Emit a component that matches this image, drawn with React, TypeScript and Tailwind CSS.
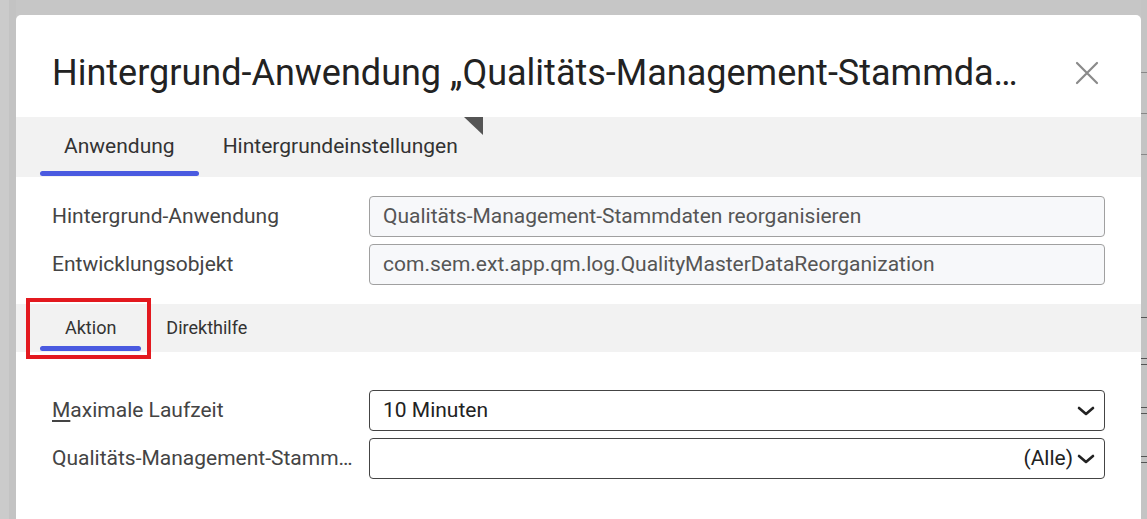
import React from "react";

const Chevron = () => (
  <svg width="18" height="10" viewBox="0 0 18 10" className="shrink-0">
    <polyline points="2,2 9,8 16,2" fill="none" stroke="#222" strokeWidth="2.6" strokeLinecap="round" strokeLinejoin="round" />
  </svg>
);

export default function App() {
  return (
    <div className="w-[1147px] h-[519px] overflow-hidden bg-[#c8c8c8] flex" style={{ fontFamily: "Roboto, 'Liberation Sans', sans-serif" }}>
      <div className="w-[16px] shrink-0 flex">
        <div className="w-[9px] bg-[#cbcbcb]" />
        <div className="w-[7px] bg-[#c3c3c3]" />
      </div>
      <div className="flex-1 flex flex-col">
        <div className="h-[15px] shrink-0 bg-[#c6c6c6]" />
        <div className="flex-1 bg-white rounded-t-[5px] flex flex-col relative">
          {/* header */}
          <div className="h-[102px] shrink-0 flex items-center pl-[36px] pr-[42px] pt-[14px]">
            <h1 className="flex-1 text-[36px] leading-[44px] text-[#222] whitespace-nowrap overflow-hidden">
              Hintergrund-Anwendung „Qualitäts-Management-Stammda…
            </h1>
            <svg width="24" height="24" viewBox="0 0 24 24" className="shrink-0 ml-[40px]">
              <path d="M2 2 L22 22 M22 2 L2 22" stroke="#8a8a8a" strokeWidth="2.2" strokeLinecap="round" />
            </svg>
          </div>
          {/* main tabs */}
          <div className="h-[60px] shrink-0 bg-[#f2f2f2] flex pl-[24px]">
            <div className="relative px-[24px] flex items-center text-[21px] text-[#333]">
              Anwendung
              <div className="absolute left-0 right-0 bottom-[1px] h-[5px] rounded-full bg-[#4a5ae0]" />
            </div>
            <div className="relative px-[24px] flex items-center text-[21px] text-[#333]">
              Hintergrundeinstellungen
              <svg width="19" height="18" viewBox="0 0 19 18" className="absolute right-[-1px] top-0">
                <polygon points="0,0 19,0 19,18" fill="#555" />
              </svg>
            </div>
          </div>
          {/* fields */}
          <div className="px-[36px] pt-[19px] flex flex-col gap-[7px]">
            <div className="flex items-center">
              <div className="w-[317px] shrink-0 text-[21px] text-[#444]">Hintergrund-Anwendung</div>
              <div className="flex-1 h-[41px] border border-[#a0a0a0] rounded-[4px] bg-[#f7f8fa] flex items-center px-[13px] text-[21px] text-[#555]">
                Qualitäts-Management-Stammdaten reorganisieren
              </div>
            </div>
            <div className="flex items-center">
              <div className="w-[317px] shrink-0 text-[21px] text-[#444]">Entwicklungsobjekt</div>
              <div className="flex-1 h-[41px] border border-[#a0a0a0] rounded-[4px] bg-[#f7f8fa] flex items-center px-[13px] text-[21px] text-[#555]">
                com.sem.ext.app.qm.log.QualityMasterDataReorganization
              </div>
            </div>
          </div>
          {/* sub tabs */}
          <div className="mt-[19px] h-[48px] shrink-0 bg-[#f2f2f2] flex pl-[24px] relative">
            <div className="relative px-[25px] flex items-center text-[18px] text-[#333] pb-[2px]">
              Aktion
              <div className="absolute left-0 right-0 bottom-[1px] h-[5px] rounded-full bg-[#4a5ae0]" />
            </div>
            <div className="relative px-[25px] flex items-center text-[18px] text-[#333] pb-[2px]">
              Direkthilfe
            </div>
            <div className="absolute left-[10px] top-[-6px] w-[125px] h-[61px] border-[4px] border-[#e3191f]" />
          </div>
          {/* action fields */}
          <div className="px-[36px] pt-[38px] flex flex-col gap-[7px]">
            <div className="flex items-center">
              <div className="w-[317px] shrink-0 text-[21px] text-[#444]">
                <span className="underline underline-offset-[3px] decoration-[1.5px]">M</span>aximale Laufzeit
              </div>
              <div className="flex-1 h-[41px] border border-[#444] rounded-[4px] bg-white flex items-center pl-[13px] pr-[9px] text-[21px] text-[#222]">
                <span className="flex-1">10 Minuten</span>
                <Chevron />
              </div>
            </div>
            <div className="flex items-center">
              <div className="w-[317px] shrink-0 text-[21px] text-[#444] whitespace-nowrap overflow-hidden text-ellipsis pr-[15px]">
                Qualitäts-Management-Stammdaten
              </div>
              <div className="flex-1 h-[41px] border border-[#444] rounded-[4px] bg-white flex items-center justify-end pl-[13px] pr-[9px] text-[21px] text-[#222] gap-[4px]">
                <span>(Alle)</span>
                <Chevron />
              </div>
            </div>
          </div>
        </div>
      </div>
      <div className="w-[6px] shrink-0 bg-[#c4c4c4] flex flex-col">
        <div className="h-[72px]" />
        <div className="h-[1px] bg-[#888]" />
        <div className="h-[40px]" />
        <div className="h-[1px] bg-[#888]" />
        <div className="h-[40px]" />
        <div className="h-[1px] bg-[#888]" />
        <div className="h-[162px]" />
        <div className="h-[1px] bg-[#555]" />
        <div className="h-[40px]" />
        <div className="h-[1px] bg-[#555]" />
        <div className="h-[5px]" />
        <div className="h-[1px] bg-[#555]" />
        <div className="h-[42px]" />
        <div className="h-[1px] bg-[#555]" />
        <div className="h-[5px]" />
        <div className="h-[1px] bg-[#555]" />
        <div className="h-[42px]" />
        <div className="h-[1px] bg-[#555]" />
        <div className="h-[5px]" />
        <div className="h-[1px] bg-[#555]" />
      </div>
    </div>
  );
}
